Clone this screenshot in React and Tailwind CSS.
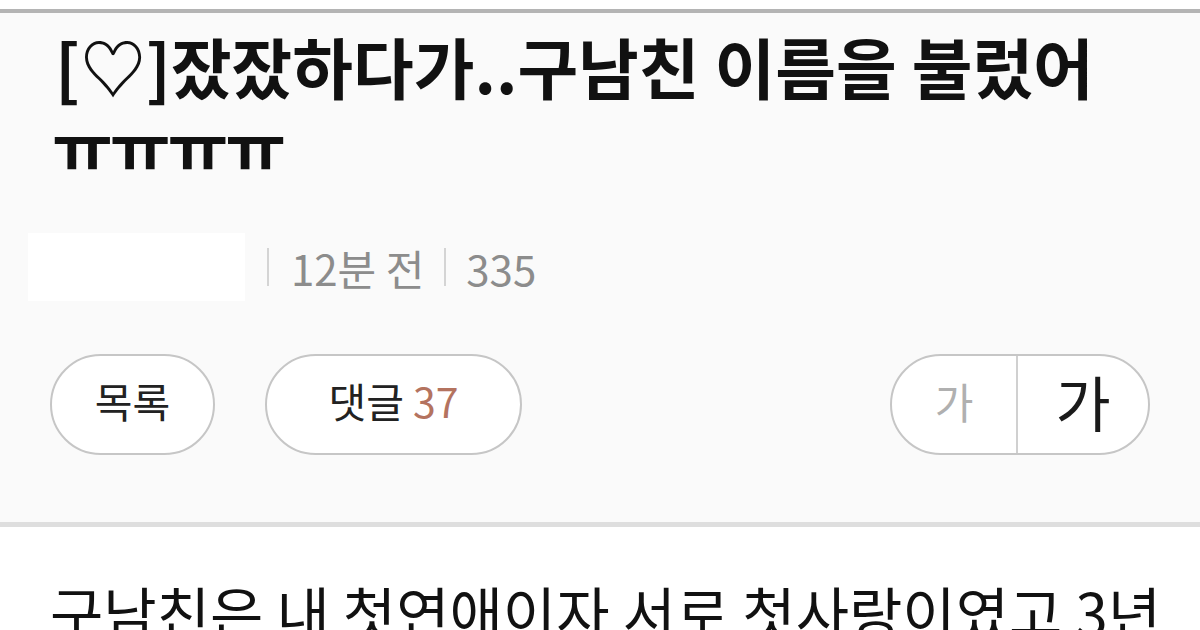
export default function App() {
  const font = { fontFamily: '"Noto Sans CJK KR", "Noto Sans", sans-serif' };

  return (
    <div className="w-[1200px] h-[630px] overflow-hidden bg-white" style={font}>
      {/* top rule */}
      <div className="h-[9px] bg-white" />
      <div className="h-[4px] bg-[#b4b4b4]" />

      {/* post header */}
      <div className="h-[509px] bg-[#fafafa] pt-[10px] px-[55px]">
        <h1 className="text-[66px] leading-[84px] font-bold text-[#111] whitespace-nowrap">
          <span className="block">[♡]잤잤하다가..구남친 이름을 불렀어</span>
          <span className="block -mt-[6px] tracking-[-3px] -ml-[3px]">ㅠㅠㅠㅠ</span>
        </h1>

        {/* meta */}
        <div className="mt-[47px] h-[70px] flex items-center -ml-[27px]">
          <div className="w-[217px] h-[68px] bg-white" />
          <span className="ml-[22px] w-[2px] h-[38px] bg-[#d4d4d4]" />
          <span className="ml-[22px] text-[42px] text-[#8c8c8c]">12분 전</span>
          <span className="ml-[20px] w-[2px] h-[38px] bg-[#d4d4d4]" />
          <span className="ml-[20px] text-[42px] text-[#8c8c8c]">335</span>
        </div>

        {/* buttons */}
        <div className="mt-[52px] flex items-center -ml-[5px]">
          <button className="w-[165px] h-[101px] pb-[8px] rounded-full border-2 border-[#c6c6c6] bg-white text-[41px] text-[#222]">
            목록
          </button>
          <button className="ml-[50px] w-[257px] h-[101px] pb-[8px] rounded-full border-2 border-[#c6c6c6] bg-white text-[41px] text-[#222]">
            댓글 <span className="text-[#b4735f]">37</span>
          </button>
          <div className="ml-auto mr-[-5px] w-[260px] h-[101px] rounded-full border-2 border-[#c6c6c6] bg-white flex">
            <button className="w-[126px] pb-[8px] border-r-2 border-[#d0d0d0] text-[42px] text-[#b0b0b0]">가</button>
            <button className="flex-1 pb-[8px] text-[60px] text-[#1a1a1a]">가</button>
          </div>
        </div>
      </div>
      <div className="h-[5px] bg-[#dedede]" />

      {/* body */}
      <p className="pt-[44px] px-[50px] text-[58px] leading-[80px] text-[#111] whitespace-nowrap">
        구남친은 내 첫연애이자 서로 첫사랑이였고 3년
      </p>
    </div>
  );
}
